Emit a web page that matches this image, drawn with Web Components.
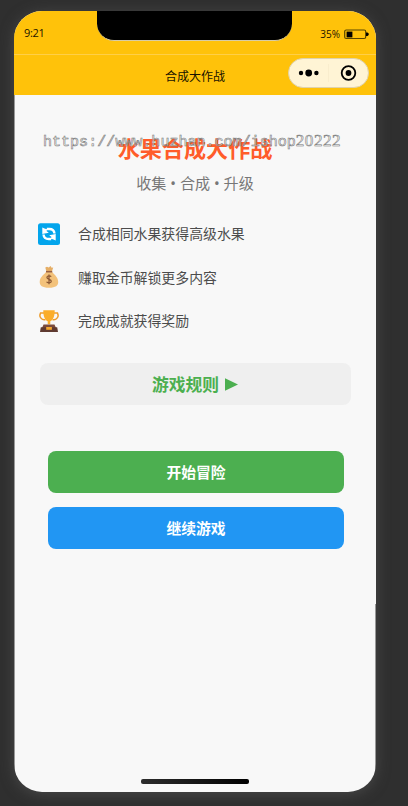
<!DOCTYPE html>
<html lang="zh-CN">
<head>
<meta charset="utf-8">
<title>合成大作战</title>
<style>
html,body{margin:0;height:806px;overflow:hidden;background:#2f2f2f}
body{font-family:"Noto Sans CJK SC","Noto Sans",sans-serif;box-sizing:border-box;padding:11px 0 0 14px}
</style>
</head>
<body>
<phone-frame>
  <status-bar slot="top"></status-bar>
  <nav-bar slot="top">合成大作战</nav-bar>
  <game-home></game-home>
  <water-mark slot="over"></water-mark>
</phone-frame>
<script>
const define = (name, html) => customElements.define(name, class extends HTMLElement {
  constructor() {
    super();
    const t = document.createElement('template');
    t.innerHTML = html;
    this.attachShadow({mode: 'open'}).append(t.content.cloneNode(true));
  }
});

define('phone-frame', `<style>
:host{display:flex;flex-direction:column;position:relative;width:362px;height:781px;border-radius:28px;overflow:hidden;background:linear-gradient(#999,#999) 0 0/1px 100% no-repeat,linear-gradient(#999,#999) 100% 100%/1px 188px no-repeat,#f8f8f8;box-shadow:0 2px 14px #5a5a5a99}
main{flex:1}
footer{height:13px;display:flex;justify-content:center}
i{width:108px;height:5px;border-radius:2px;background:linear-gradient(90deg,#2c2c2c,#000)}
</style><slot name="top"></slot><main><slot></slot></main><footer><i></i></footer><slot name="over"></slot>`);

define('status-bar', `<style>
:host{display:grid;grid-template-columns:83px 195px 1fr;box-sizing:border-box;height:44px;background:#ffc20a;border-bottom:1px solid #ffcf48;font:11px/13px "Open Sans","Noto Sans",sans-serif;color:#1b1400}
.time{padding:15px 0 0 10px;letter-spacing:-.35px}
.notch{height:29px;background:#000;border-radius:0 0 17px 17px;border-bottom:1px solid #d8cca5}
.power{display:flex;justify-content:flex-end;align-items:flex-start;padding:17px 7px 0 0;gap:4px;font-size:10px}
svg{margin-top:1px}
</style><span class="time">9:21</span><span class="notch"></span><span class="power"><span>35%</span>
<svg width="25" height="11" viewBox="0 0 25 11"><rect x=".7" y="1" width="21" height="8.5" rx="1.5" fill="none" stroke="#594600" stroke-width="1.2"/><rect x="2.6" y="2.6" width="5.8" height="5.8" fill="#000"/><path d="M22 3.5h1.5l1.2 1.1v1.4l-1.2 1.1H22z" fill="#000"/></svg></span>`);

define('nav-bar', `<style>
:host{display:grid;grid-template-columns:1fr auto 1fr;height:40px;background:#ffc20a;font-size:12px;line-height:18px;color:#181200}
.title{grid-column:2;padding-top:12px}
capsule-menu{justify-self:end;margin:3px 7px 0 0}
</style><span class="title"><slot></slot></span><capsule-menu></capsule-menu>`);

define('capsule-menu', `<style>
:host{display:flex;align-items:center;box-sizing:border-box;width:81px;height:30px;border:1px solid #dfd2ad;border-radius:15px;background:#fff4d5}
</style><svg width="79" height="28" viewBox="0 0 79 28"><g fill="#000"><circle cx="12" cy="14" r="2.2"/><circle cx="19.7" cy="14" r="3.4"/><circle cx="27.4" cy="14" r="2.2"/><circle cx="59.5" cy="14" r="2.9"/></g><circle cx="59.5" cy="14" r="6.8" fill="none" stroke="#000" stroke-width="1.8"/><path d="M39.5 5v18" stroke="#f9edcd"/></svg>`);

define('game-home', `<style>
:host{display:flex;flex-direction:column}
h1{margin:35px 0 0;text-align:center;font-size:22.1px;line-height:34px;font-weight:700;color:#ff5c2a}
p{margin:7px 0 0;text-align:center;font-family:"Noto Sans","Noto Sans CJK SC",sans-serif;font-size:15.1px;line-height:24px;color:#777}
.list{display:grid;grid-template-rows:repeat(3,43.5px);margin:17px 24px 0 23px}
.rules{margin:20px 25px 0 26px}
.actions{display:grid;gap:14px;margin:46px 32px 0 34px}
</style>
<h1>水果合成大作战</h1><p>收集 • 合成 • 升级</p>
<div class="list">
<feature-row><svg slot="icon" width="24" height="24" viewBox="0 0 24 24"><rect x="1" y="1.300" width="22" height="21.700" rx="2.500" fill="#03a5ec"/><g fill="none" stroke="#fff" stroke-width="2.400"><path d="M6.500 12.500c.3 3 2.500 4.500 5.200 4.500h2.500"/><path d="M17.500 11.500c-.3-3-2.500-4.500-5.200-4.500H9.800"/></g><path d="M5.300 5.500v6.400l6.500-1.200-2.300-1.800 1-1.700-2.400-.400zM18.700 18.500v-6.400l-6.500 1.200 2.300 1.800-1 1.700 2.400.400z" fill="#fff"/></svg>合成相同水果获得高级水果</feature-row>
<feature-row><svg slot="icon" width="24" height="24" viewBox="0 0 24 24"><path d="M8.300 2.500 10 1.700l1.700.700L13.600 1l1 1.700 1.600-.2-1.400 4.500H9.500z" fill="#e5ae66"/><path d="M9.300 6.500h5.700c.7 2 6 4.800 6.200 10.200.2 3.800-2.400 6-9.200 6s-9.500-2.200-9.300-6C2.900 11.300 8.600 8.500 9.300 6.500z" fill="#f3c27b"/><path d="M9 6.700h6.200" stroke="#986044" stroke-width="1.500"/><path d="M14.100 11.700c-.5-1-4.200-1.200-4.200.8 0 2.200 4.400 1.400 4.400 3.800 0 2-4 1.900-4.700.5M12 9.500v9.800" fill="none" stroke="#8d5935" stroke-width="1.250"/></svg>赚取金币解锁更多内容</feature-row>
<feature-row><svg slot="icon" width="24" height="24" viewBox="0 0 24 24"><path d="M7 4H3.500C1.500 8 5 11.500 8.500 10.500M17 4h3.500c2 4-1.500 7.500-5 6.500" fill="none" stroke="#ee9d2d" stroke-width="1.500"/><path d="M6.300 1.300h11.400c.1 5.700-1.500 9.800-4.400 11v3h-2.600v-3c-2.900-1.200-4.500-5.300-4.400-11z" fill="#fbad29"/><path d="M6.500 15.500h11l1.500 3.500H5z" fill="#7b4b3b"/><path d="M3.800 18.300h16.400L21 23H3z" fill="#5f3a30"/><rect x="9.200" y="18" width="5.700" height="2.800" fill="#f4a62e"/></svg>完成成就获得奖励</feature-row>
</div>
<game-button class="rules" style="--bg:#efefef;--fg:#4caf50;--size:16.8px">游戏规则<svg slot="end" width="15" height="15" viewBox="0 0 15 15"><path d="M1 1.200v12.600L14 7.500z" fill="#4caf50"/></svg></game-button>
<div class="actions"><game-button style="--bg:#4caf50">开始冒险</game-button><game-button style="--bg:#2196f3">继续游戏</game-button></div>`);

define('feature-row', `<style>
:host{display:flex;align-items:center;gap:17px;font-size:13.9px;line-height:20px;color:#4c4c4c}
.icon{display:flex;width:24px}
.text{padding-bottom:1px}
</style><span class="icon"><slot name="icon"></slot></span><span class="text"><slot></slot></span>`);

define('game-button', `<style>
:host{display:block}
button{display:flex;align-items:center;justify-content:center;gap:5px;width:100%;height:42px;border:0;border-radius:8px;padding:1px 0 0;background:var(--bg);color:var(--fg,#fff);font-family:inherit;font-weight:700;font-size:var(--size,14.8px);line-height:24px}
</style><button><span><slot></slot></span><slot name="end"></slot></button>`);

define('water-mark', `<style>
:host{position:absolute;left:29px;top:121px;font:15.05px/20px "Liberation Mono",monospace;white-space:nowrap;color:#f8f8f899;-webkit-text-stroke:.55px #747474;pointer-events:none}
span{font:17px/18px "Liberation Serif",serif;letter-spacing:.530px}
</style>https://www.huzhan.com/ishop<span>20222</span>`);
</script>
</body>
</html>
